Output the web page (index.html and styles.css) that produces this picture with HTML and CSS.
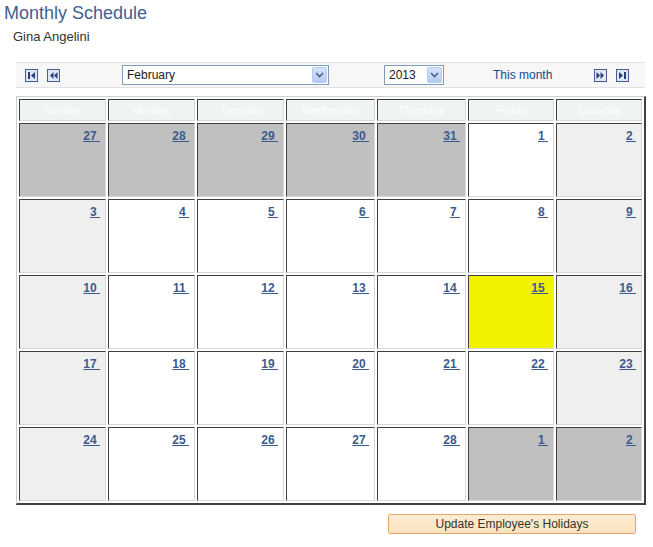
FILE: index.html
```html
<!DOCTYPE html>
<html lang="en">
<head>
  <meta charset="UTF-8" />
  <title>Monthly Schedule</title>
  <link rel="stylesheet" href="styles.css">
</head>
<body>
  <h1 class="page-title">Monthly Schedule</h1>
  <div class="emp-name">Gina Angelini</div>

  <div class="toolbar">
    <span class="nav-btn">
      <svg width="13" height="13" viewBox="0 0 13 13"><rect x="0.5" y="0.5" width="12" height="12" fill="#dfe7f6" stroke="#4a5d8f"/><rect x="3" y="3" width="2" height="7" fill="#2a3f78"/><path d="M10 3 L6 6.5 L10 10 Z" fill="#2a3f78"/></svg>
    </span>
    <span class="nav-btn">
      <svg width="13" height="13" viewBox="0 0 13 13"><rect x="0.5" y="0.5" width="12" height="12" fill="#dfe7f6" stroke="#4a5d8f"/><path d="M6.5 3 L3 6.5 L6.5 10 Z M10.5 3 L7 6.5 L10.5 10 Z" fill="#2a3f78"/></svg>
    </span>
    <div class="dropdown month-select">
      <span class="dropdown-text">February</span>
      <span class="dropdown-arrow"><svg width="9" height="6" viewBox="0 0 9 6"><path d="M1 1 L4.5 4.5 L8 1" fill="none" stroke="#4d6185" stroke-width="1.6"/></svg></span>
    </div>
    <div class="dropdown year-select">
      <span class="dropdown-text">2013</span>
      <span class="dropdown-arrow"><svg width="9" height="6" viewBox="0 0 9 6"><path d="M1 1 L4.5 4.5 L8 1" fill="none" stroke="#4d6185" stroke-width="1.6"/></svg></span>
    </div>
    <a class="this-month" href="#">This month</a>
    <span class="nav-btn nav-right">
      <svg width="13" height="13" viewBox="0 0 13 13"><rect x="0.5" y="0.5" width="12" height="12" fill="#dfe7f6" stroke="#4a5d8f"/><path d="M2.5 3 L6 6.5 L2.5 10 Z M6.5 3 L10 6.5 L6.5 10 Z" fill="#2a3f78"/></svg>
    </span>
    <span class="nav-btn">
      <svg width="13" height="13" viewBox="0 0 13 13"><rect x="0.5" y="0.5" width="12" height="12" fill="#dfe7f6" stroke="#4a5d8f"/><path d="M3 3 L7 6.5 L3 10 Z" fill="#2a3f78"/><rect x="8" y="3" width="2" height="7" fill="#2a3f78"/></svg>
    </span>
  </div>

  <table class="calendar">
    <colgroup>
      <col class="col-std"><col class="col-std"><col class="col-std"><col class="col-wide"><col class="col-wide"><col class="col-narrow"><col class="col-narrow">
    </colgroup>
    <thead>
      <tr>
        <th>Sunday</th><th>Monday</th><th>Tuesday</th><th>Wednesday</th><th>Thursday</th><th>Friday</th><th>Saturday</th>
      </tr>
    </thead>
    <tbody>
      <tr>
        <td class="other"><a href="#">27&nbsp;</a></td>
        <td class="other"><a href="#">28&nbsp;</a></td>
        <td class="other"><a href="#">29&nbsp;</a></td>
        <td class="other"><a href="#">30&nbsp;</a></td>
        <td class="other"><a href="#">31&nbsp;</a></td>
        <td><a href="#">1&nbsp;</a></td>
        <td class="weekend"><a href="#">2&nbsp;</a></td>
      </tr>
      <tr>
        <td class="weekend"><a href="#">3&nbsp;</a></td>
        <td><a href="#">4&nbsp;</a></td>
        <td><a href="#">5&nbsp;</a></td>
        <td><a href="#">6&nbsp;</a></td>
        <td><a href="#">7&nbsp;</a></td>
        <td><a href="#">8&nbsp;</a></td>
        <td class="weekend"><a href="#">9&nbsp;</a></td>
      </tr>
      <tr>
        <td class="weekend"><a href="#">10&nbsp;</a></td>
        <td><a href="#">11&nbsp;</a></td>
        <td><a href="#">12&nbsp;</a></td>
        <td><a href="#">13&nbsp;</a></td>
        <td><a href="#">14&nbsp;</a></td>
        <td class="today"><a href="#">15&nbsp;</a></td>
        <td class="weekend"><a href="#">16&nbsp;</a></td>
      </tr>
      <tr>
        <td class="weekend"><a href="#">17&nbsp;</a></td>
        <td><a href="#">18&nbsp;</a></td>
        <td><a href="#">19&nbsp;</a></td>
        <td><a href="#">20&nbsp;</a></td>
        <td><a href="#">21&nbsp;</a></td>
        <td><a href="#">22&nbsp;</a></td>
        <td class="weekend"><a href="#">23&nbsp;</a></td>
      </tr>
      <tr>
        <td class="weekend"><a href="#">24&nbsp;</a></td>
        <td><a href="#">25&nbsp;</a></td>
        <td><a href="#">26&nbsp;</a></td>
        <td><a href="#">27&nbsp;</a></td>
        <td><a href="#">28&nbsp;</a></td>
        <td class="other"><a href="#">1&nbsp;</a></td>
        <td class="other"><a href="#">2&nbsp;</a></td>
      </tr>
    </tbody>
  </table>

  <div class="actions">
    <button class="update-btn">Update Employee's Holidays</button>
  </div>
</body>
</html>
```

FILE: styles.css
```css
body {
  margin: 0;
  padding: 0;
  font-family: "Liberation Sans", Arial, sans-serif;
  background: #fff;
  color: #333;
}
.page-title {
  margin: 0;
  padding: 2px 0 0 4px;
  font-size: 18px;
  font-weight: normal;
  line-height: 22px;
  color: #3f5f8f;
}
.emp-name {
  padding: 5px 0 0 13px;
  font-size: 13px;
  line-height: 16px;
  color: #333;
}
.toolbar {
  display: flex;
  align-items: center;
  margin: 17px 0 0 16px;
  width: 629px;
  height: 26px;
  box-sizing: border-box;
  padding-left: 9px;
  padding-right: 16px;
  background: #f7f7f7;
  border-top: 1px solid #e2e2e2;
  border-bottom: 1px solid #e2e2e2;
}
.nav-btn {
  display: flex;
  width: 13px;
  height: 13px;
}
.nav-btn + .nav-btn {
  margin-left: 9px;
}
.nav-btn.nav-right {
  margin-left: auto;
}
.dropdown {
  display: flex;
  align-items: center;
  justify-content: space-between;
  height: 20px;
  box-sizing: border-box;
  border: 1px solid #7f9db9;
  background: #fff;
  padding: 0 1px 0 4px;
}
.month-select {
  width: 207px;
  margin-left: 62px;
}
.year-select {
  width: 60px;
  margin-left: 55px;
}
.dropdown-text {
  font-size: 12px;
  color: #222;
}
.dropdown-arrow {
  display: flex;
  align-items: center;
  justify-content: center;
  width: 15px;
  height: 16px;
  border-radius: 2px;
  background: linear-gradient(#d5e2fb, #b5cbf5);
  border: 1px solid #b7c9ee;
  box-sizing: border-box;
}
.this-month {
  margin-left: 49px;
  font-size: 12px;
  color: #0f4c8f;
  text-decoration: none;
}
.calendar {
  margin: 8px 0 0 16px;
  width: 629px;
  border-collapse: separate;
  border-spacing: 2px;
  border-top: 1px solid #cfcfcf;
  border-left: 1px solid #cfcfcf;
  border-right: 2px solid #404040;
  border-bottom: 2px solid #404040;
  table-layout: fixed;
}
.col-std { width: 87px; }
.col-wide { width: 89px; }
.col-narrow { width: 86px; }
.calendar th,
.calendar td {
  border-top: 1px solid #404040;
  border-left: 1px solid #404040;
  border-right: 1px solid #d8d8d8;
  border-bottom: 1px solid #d8d8d8;
}
.calendar th {
  height: 22px;
  box-sizing: border-box;
  padding: 0;
  background: #eef3f4;
  color: #fff;
  font-size: 11px;
  font-weight: normal;
}
.calendar td {
  height: 74px;
  padding: 2px 5px 0 0;
  box-sizing: border-box;
  vertical-align: top;
  text-align: right;
  background: #fff;
}
.calendar td.other {
  background: #c0c0c0;
}
.calendar td.weekend {
  background: #efefef;
}
.calendar td.today {
  background: #f2f200;
}
.calendar td a {
  font-size: 12px;
  font-weight: bold;
  color: #3b5b8e;
  text-decoration: underline;
}
.actions {
  display: flex;
  justify-content: flex-end;
  width: 629px;
  margin: 9px 0 0 16px;
  padding-right: 9px;
  box-sizing: border-box;
}
.update-btn {
  width: 248px;
  height: 20px;
  padding: 0;
  font-family: "Liberation Sans", Arial, sans-serif;
  font-size: 12px;
  color: #333;
  background: linear-gradient(#fdecd2, #fbe3bd);
  border: 1px solid #e0a86a;
  border-radius: 2px;
}
```
